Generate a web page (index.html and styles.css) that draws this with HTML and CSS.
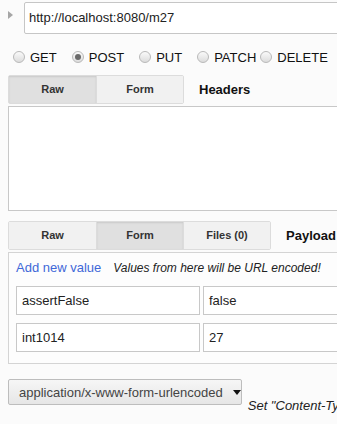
FILE: index.html
```html
<!DOCTYPE html>
<html lang="en">
<head>
  <meta charset="UTF-8" />
  <title>Request</title>
  <link rel="stylesheet" href="styles.css">
</head>
<body>
  <div class="page">
    <div class="url-row">
      <span class="toggle"></span>
      <div class="url-input">http://localhost:8080/m27</div>
    </div>

    <div class="methods">
      <label class="method"><span class="radio"></span>GET</label>
      <label class="method"><span class="radio checked"></span>POST</label>
      <label class="method"><span class="radio"></span>PUT</label>
      <label class="method tight"><span class="radio"></span>PATCH</label>
      <label class="method"><span class="radio"></span>DELETE</label>
    </div>

    <div class="tab-row">
      <div class="tabs">
        <div class="tab active">Raw</div>
        <div class="tab">Form</div>
      </div>
      <div class="tab-title">Headers</div>
    </div>
    <div class="headers-box"></div>

    <div class="tab-row payload-row">
      <div class="tabs">
        <div class="tab">Raw</div>
        <div class="tab active">Form</div>
        <div class="tab">Files (0)</div>
      </div>
      <div class="tab-title">Payload</div>
    </div>
    <div class="form-box">
      <div class="form-head">
        <a class="add-link">Add new value</a>
        <span class="note">Values from here will be URL encoded!</span>
      </div>
      <div class="pair">
        <div class="field key">assertFalse</div>
        <div class="field value">false</div>
      </div>
      <div class="pair">
        <div class="field key">int1014</div>
        <div class="field value">27</div>
      </div>
    </div>

    <div class="content-type">
      <div class="select">application/x-www-form-urlencoded<span class="caret"></span></div>
      <span class="ct-note">Set "Content-Type" header to overwrite this value.</span>
    </div>
  </div>
</body>
</html>
```

FILE: styles.css
```css
* { box-sizing: border-box; }

html {
  background: #fbfbfb;
  overflow: hidden;
}

body {
  margin: 0;
  padding: 0;
  font-family: "Liberation Sans", Arial, sans-serif;
  color: #222;
}

.page {
  width: 420px;
  padding: 2px 0 20px 8px;
}

.url-row {
  display: flex;
  align-items: flex-start;
}

.toggle {
  width: 0;
  height: 0;
  margin: 9px 11px 0 0;
  border-top: 4px solid transparent;
  border-bottom: 4px solid transparent;
  border-left: 5px solid #a6a6a6;
}

.url-input {
  flex: 1;
  height: 32px;
  padding: 0 4px;
  line-height: 30px;
  font-size: 13px;
  background: #fff;
  border: 1px solid #c6c6c6;
  border-radius: 2px;
}

.methods {
  display: flex;
  align-items: center;
  height: 20px;
  margin-top: 13px;
  padding-left: 5px;
  font-size: 13px;
  color: #111;
}

.method {
  display: flex;
  align-items: center;
  margin-right: 15px;
}

.method.tight { margin-right: 4px; }

.radio {
  width: 12px;
  height: 12px;
  margin-right: 5px;
  border-radius: 50%;
  border: 1px solid #b9b9b9;
  background: linear-gradient(#fafafa, #dcdcdc);
  position: relative;
}

.radio.checked::after {
  content: "";
  position: absolute;
  left: 2px;
  top: 2px;
  width: 6px;
  height: 6px;
  border-radius: 50%;
  background: #6a6a6a;
}

.tab-row {
  display: flex;
  align-items: center;
  margin-top: 8px;
}

.tabs {
  display: flex;
  border: 1px solid #dcdcdc;
  border-radius: 2px;
}

.tab {
  width: 87px;
  height: 27px;
  line-height: 27px;
  text-align: center;
  font-size: 11px;
  font-weight: bold;
  color: #333;
  background: #f1f1f1;
}

.tab + .tab { border-left: 1px solid #dcdcdc; }

.tab.active {
  background: #e0e0e0;
  box-shadow: inset 0 1px 2px rgba(0, 0, 0, 0.1);
}

.tab-title {
  margin-left: 15px;
  font-size: 13px;
  font-weight: bold;
  color: #111;
}

.headers-box {
  height: 105px;
  margin-top: 2px;
  background: #fff;
  border: 1px solid #c8c8c8;
}

.payload-row { margin-top: 10px; }

.form-box {
  margin-top: 2px;
  padding: 7px 0 11px 7px;
  border: 1px solid #d4d4d4;
  border-right: none;
  background: #fdfdfd;
}

.form-head {
  display: flex;
  align-items: baseline;
  height: 20px;
}

.add-link {
  font-size: 13px;
  color: #3f68d8;
  cursor: pointer;
}

.note {
  margin-left: 12px;
  font-size: 12px;
  font-style: italic;
  color: #222;
}

.pair {
  display: flex;
  gap: 3px;
  margin-top: 6px;
}

.pair + .pair { margin-top: 8px; }

.field {
  height: 29px;
  line-height: 27px;
  padding: 0 5px;
  font-size: 13px;
  background: #fff;
  border: 1px solid #c8c8c8;
}

.field.key { width: 184px; }
.field.value { flex: 1; }

.content-type {
  display: flex;
  align-items: flex-end;
  margin-top: 15px;
  white-space: nowrap;
}

.select {
  display: flex;
  align-items: center;
  width: 238px;
  height: 26px;
  padding: 0 0 0 10px;
  font-size: 13px;
  color: #444;
  background: linear-gradient(#f6f6f6, #e6e6e6);
  border: 1px solid #bdbdbd;
  border-radius: 2px;
}

.caret {
  width: 0;
  height: 0;
  margin-left: 10px;
  border-left: 4px solid transparent;
  border-right: 4px solid transparent;
  border-top: 5px solid #111;
}

.ct-note {
  margin: 0 0 -8px 6px;
  font-size: 13px;
  font-style: italic;
  color: #222;
}
```
